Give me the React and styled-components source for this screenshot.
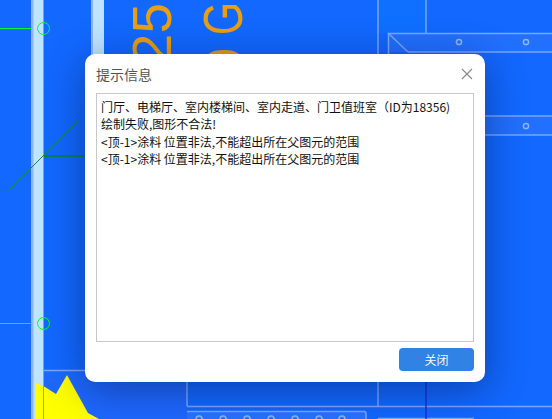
import styled, { createGlobalStyle } from "styled-components";

const GlobalStyle = createGlobalStyle`
  html, body {
    margin: 0;
    padding: 0;
    background: #1268ff;
  }
`;

const Stage = styled.div`
  position: relative;
  width: 552px;
  height: 419px;
  overflow: hidden;
  padding: 54px 0 0 85px;
  box-sizing: border-box;
  background-color: #1268ff;
  font-family: "Noto Sans CJK SC", "Noto Sans", sans-serif;
`;

const Drawing = styled.svg`
  position: absolute;
  left: 0;
  top: 0;
`;

const Dialog = styled.div`
  position: relative;
  display: flex;
  flex-direction: column;
  width: 400px;
  height: 328px;
  padding: 0 11px 11px;
  box-sizing: border-box;
  background-color: #fff;
  border-radius: 10px;
  box-shadow: 0 8px 40px rgba(0, 10, 50, 0.42);
`;

const Header = styled.div`
  display: flex;
  align-items: center;
  justify-content: space-between;
  height: 39px;
  flex: none;
`;

const Title = styled.span`
  font-size: 14px;
  line-height: 20px;
  color: #555;
`;

const CloseButton = styled.button`
  display: flex;
  padding: 0;
  margin-right: 1px;
  border: none;
  background: none;
`;

const MessageBox = styled.div`
  height: 249px;
  flex: none;
  box-sizing: border-box;
  padding: 4px 4px;
  border: 1px solid #c8c8c8;
  font-size: 12px;
  line-height: 17.33px;
  color: #111;
`;

const MessageLine = styled.div`
  white-space: pre;
`;

const Footer = styled.div`
  display: flex;
  justify-content: flex-end;
  margin-top: 6px;
`;

const PrimaryButton = styled.button`
  width: 75px;
  height: 23px;
  padding: 0;
  border: none;
  border-radius: 4px;
  background-color: #3082e4;
  color: #f2f7ff;
  font-family: inherit;
  font-size: 12px;
  line-height: 23px;
`;

const messages = [
  "门厅、电梯厅、室内楼梯间、室内走道、门卫值班室（ID为18356)",
  "绘制失败,图形不合法!",
  "<顶-1>涂料 位置非法,不能超出所在父图元的范围",
  "<顶-1>涂料 位置非法,不能超出所在父图元的范围",
];

const CAD_LINE = "#7ba6ff";
const HOLES_TOP = [
  [459, 42],
  [526, 42],
  [526, 126],
];
const HOLES_BOTTOM = [199, 223, 247, 271, 295, 319, 342];

const CadBackground = () => (
  <Drawing width="552" height="419" viewBox="0 0 552 419">
    <rect x="378" y="0" width="48" height="33" fill="#0f70ff" />
    <rect x="388" y="33" width="164" height="19" fill="#2170ff" />
    <rect x="485" y="116" width="67" height="19" fill="#2170ff" />
    <rect x="44" y="370" width="143" height="49" fill="#1e68ff" />
    <rect x="187" y="411" width="179" height="8" fill="#2a72ff" />

    {/* left columns */}
    <rect x="31" y="0" width="13" height="419" fill="#bfe4ff" />
    <rect x="31" y="0" width="2" height="419" fill="#8db6ff" />
    <rect x="33" y="0" width="1" height="419" fill="#a6cdff" />
    <rect x="91" y="0" width="13" height="60" fill="#bfe4ff" />
    <rect x="91" y="0" width="2" height="60" fill="#8db6ff" />

    {/* yellow hatch */}
    <polygon
      points="36,383 45,387 56,394 67,375 88,413 99,419 36,419"
      fill="#ffff00"
    />

    {/* green axes */}
    <g fill="none" stroke="#00ff2a" strokeWidth="1">
      <line x1="43.5" y1="0" x2="43.5" y2="419" />
      <line x1="0" y1="28.5" x2="31" y2="28.5" />
      <line x1="0" y1="323.5" x2="31" y2="323.5" />
      <circle cx="43.5" cy="28.5" r="6" />
      <circle cx="43.5" cy="323.5" r="6" />
    </g>
    <line x1="77" y1="122" x2="10" y2="189" stroke="#0f8a4a" strokeWidth="1" />
    <line x1="44" y1="156" x2="85" y2="156" stroke="#0b7f55" strokeWidth="2" />

    {/* dimension text */}
    <g fill="#e89f12" fontFamily="'Liberation Sans', sans-serif" fontSize="55">
      <text transform="translate(171 3) rotate(-90)" textAnchor="end">
        25
      </text>
      <text transform="translate(242 2) rotate(-90) scale(0.78 1)" textAnchor="end">
        G
      </text>
      <text transform="translate(243 48) rotate(-90)" textAnchor="end">
        0
      </text>
    </g>

    {/* walls */}
    <g fill="none" stroke={CAD_LINE} strokeWidth="1.5">
      <line x1="378" y1="0" x2="378" y2="60" />
      <line x1="426" y1="0" x2="426" y2="33" />
      <path d="M552 33.5H388.5V60" />
      <line x1="388" y1="33" x2="408" y2="52" />
      <line x1="408" y1="52" x2="552" y2="52" />
      <line x1="485" y1="116" x2="552" y2="116" />
      <line x1="485" y1="135" x2="552" y2="135" />
      <line x1="44" y1="370.5" x2="90" y2="370.5" />
      <line x1="187" y1="380" x2="187" y2="406" />
      <line x1="378" y1="380" x2="378" y2="406" />
      <line x1="187" y1="406.5" x2="552" y2="406.5" />
      <path d="M187 411.5H364Q366 411.5 366 414V419" />
      <line x1="378" y1="418.5" x2="474" y2="418.5" />
    </g>
    <line x1="426" y1="380" x2="426" y2="419" stroke="#1a2fdc" strokeWidth="1.5" />

    <g fill="none" stroke="#8fb4ff" strokeWidth="1.5">
      {HOLES_TOP.map(([cx, cy]) => (
        <circle key={`${cx}-${cy}`} cx={cx} cy={cy} r="2.6" />
      ))}
      {HOLES_BOTTOM.map((cx) => (
        <circle key={cx} cx={cx} cy="419" r="3" />
      ))}
    </g>
  </Drawing>
);

const App = () => (
  <Stage>
    <GlobalStyle />
    <CadBackground />
    <Dialog>
      <Header>
        <Title>提示信息</Title>
        <CloseButton aria-label="关闭">
          <svg width="12" height="12" viewBox="0 0 12 12">
            <path d="M1 1L11 11M11 1L1 11" stroke="#888" strokeWidth="1.1" fill="none" />
          </svg>
        </CloseButton>
      </Header>
      <MessageBox>
        {messages.map((line, i) => (
          <MessageLine key={i}>{line}</MessageLine>
        ))}
      </MessageBox>
      <Footer>
        <PrimaryButton>关闭</PrimaryButton>
      </Footer>
    </Dialog>
  </Stage>
);

export default App;
